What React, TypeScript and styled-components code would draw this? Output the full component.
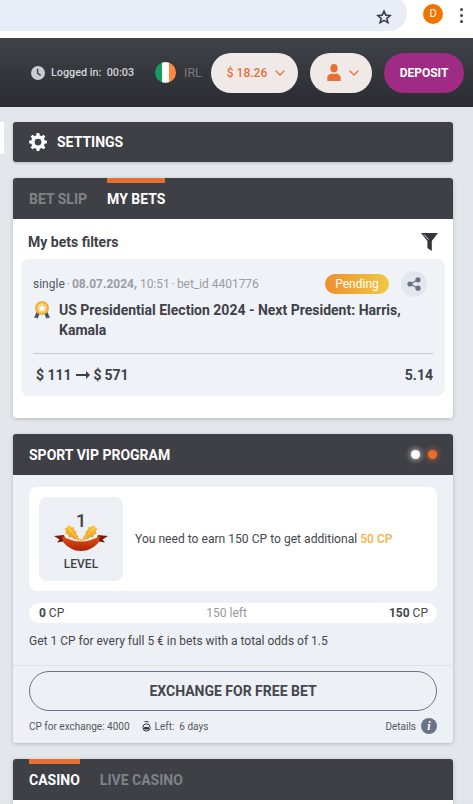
import styled, { createGlobalStyle } from "styled-components";
import { ChevronDown } from "lucide-react";

const GlobalStyle = createGlobalStyle`
  html, body {
    margin: 0;
    padding: 0;
    height: 100%;
    overflow: hidden;
    background: #e3e6ea;
    font-family: Roboto, "Liberation Sans", sans-serif;
  }
  * { box-sizing: border-box; }
`;

const BrowserBar = styled.div`
  height: 38px;
  background: #fff;
  display: flex;
  align-items: flex-start;
  overflow: hidden;
`;

const UrlField = styled.div`
  width: 407px;
  height: 36px;
  margin-top: -5px;
  background: #e9edf7;
  border-radius: 0 18px 18px 0;
  display: flex;
  align-items: center;
  justify-content: flex-end;
  padding: 7px 15px 0 0;
  flex: none;
`;

const Avatar = styled.div`
  width: 20px;
  height: 20px;
  margin: 4px 0 0 16px;
  border-radius: 50%;
  background: #f07400;
  color: #fff;
  font-size: 11px;
  line-height: 20px;
  text-align: center;
  flex: none;
`;

const MenuDots = styled.div`
  margin: 8px 0 0 17px;
  display: flex;
  flex-direction: column;
  gap: 3px;
  span {
    width: 3px;
    height: 3px;
    border-radius: 50%;
    background: #444;
  }
`;

const TopHeader = styled.header`
  height: 69px;
  background: linear-gradient(#3f4248, #2a2c31);
  display: flex;
  align-items: center;
  padding: 0 9px 0 31px;
`;

const LoginInfo = styled.div`
  display: flex;
  align-items: center;
  color: #d3d6da;
  font-size: 10.8px;
  font-weight: 500;
  width: 124px;
  span {
    margin-left: 6px;
    white-space: pre;
  }
`;

const Flag = styled.div`
  width: 21px;
  height: 21px;
  border-radius: 50%;
  overflow: hidden;
  display: flex;
  flex: none;
  i {
    flex: 1;
  }
`;

const Country = styled.span`
  color: #76797e;
  font-size: 12.5px;
  margin-left: 8px;
  width: 27px;
`;

const Pill = styled.button<{ $w: number }>`
  width: ${(p) => p.$w}px;
  height: 40px;
  margin-right: 12px;
  border: 0;
  border-radius: 20px;
  background: #efeae8;
  color: #ea6f35;
  font: 500 12px Roboto, sans-serif;
  display: flex;
  align-items: center;
  justify-content: center;
  gap: 5px;
  flex: none;
  padding: 0 0 0 6px;
`;

const DepositButton = styled.button`
  width: 80px;
  height: 40px;
  border: 0;
  border-radius: 20px;
  background: #9f2b84;
  color: #fff;
  font: 700 12px Roboto, sans-serif;
  padding: 0;
  flex: none;
`;

const Content = styled.main`
  padding-top: 15px;
  display: flex;
  flex-direction: column;
  gap: 16px;
`;

const SettingsRow = styled.div`
  display: flex;
  gap: 9px;
  align-items: flex-start;
`;

const SideTab = styled.div`
  width: 4px;
  height: 32px;
  background: #fff;
`;

const SettingsBar = styled.div`
  width: 440px;
  height: 40px;
  background: #3e4046;
  border-radius: 3px;
  box-shadow: 0 1px 3px rgba(0, 0, 0, 0.18);
  display: flex;
  align-items: center;
  padding-left: 16px;
  gap: 10px;
  color: #fff;
  font-size: 14px;
  font-weight: 700;
`;

const Card = styled.section<{ $bg?: string }>`
  width: 440px;
  margin-left: 13px;
  border-radius: 3px;
  overflow: hidden;
  background: ${(p) => p.$bg ?? "#fff"};
  box-shadow: 0 1px 4px rgba(0, 0, 0, 0.2);
`;

const CardHead = styled.div`
  height: 41px;
  background: #3e4046;
  display: flex;
  align-items: stretch;
  padding: 0 16px;
  gap: 20px;
`;

const Tab = styled.div<{ $active?: boolean }>`
  color: ${(p) => (p.$active ? "#fff" : "#808286")};
  border-top: 5px solid ${(p) => (p.$active ? "#e97033" : "transparent")};
  font-size: 14px;
  font-weight: 700;
  line-height: 32px;
  white-space: nowrap;
`;

const TitledHead = styled(CardHead)`
  align-items: center;
  justify-content: space-between;
  color: #fff;
  font-size: 14px;
  font-weight: 700;
`;

const Dots = styled.div`
  display: flex;
  gap: 8px;
`;

const Dot = styled.i<{ $c: string }>`
  width: 9px;
  height: 9px;
  border-radius: 50%;
  background: ${(p) => p.$c};
  box-shadow: 0 0 6px ${(p) => p.$c};
`;

const BetsBody = styled.div`
  height: 199px;
  padding: 0 8px;
`;

const FiltersRow = styled.div`
  height: 40px;
  display: flex;
  align-items: center;
  justify-content: space-between;
  padding: 6px 7px 0 7px;
  color: #3f4148;
  font-size: 14px;
  font-weight: 700;
`;

const BetCard = styled.div`
  height: 137px;
  background: #eff2f7;
  border-radius: 8px;
  padding: 12px 12px 0;
`;

const BetMeta = styled.div`
  height: 26px;
  display: flex;
  align-items: center;
  padding-right: 6px;
  font-size: 12px;
  color: #9a9da3;
  white-space: pre;
  b {
    font-weight: 700;
  }
`;

const BetType = styled.span`
  color: #55585f;
`;

const MetaDot = styled.span`
  margin: 0 2px;
`;

const BetId = styled.span`
  letter-spacing: -0.03px;
`;

const Pending = styled.span`
  margin-left: auto;
  width: 64px;
  height: 20px;
  border-radius: 10px;
  background: linear-gradient(90deg, #ef8f2c, #f0c945);
  color: #fff;
  font-size: 12px;
  line-height: 20px;
  text-align: center;
`;

const ShareButton = styled.span`
  width: 26px;
  height: 26px;
  margin-left: 12px;
  border-radius: 50%;
  background: #e3e6ec;
  display: flex;
  align-items: center;
  justify-content: center;
`;

const BetTitle = styled.div`
  display: flex;
  gap: 9px;
  margin-top: 3px;
  color: #3f4148;
  font-size: 14px;
  font-weight: 700;
  line-height: 20px;
  height: 53px;
  svg {
    flex: none;
    margin: 1px 0 0 1px;
  }
`;

const BetFoot = styled.div`
  border-top: 1px solid #c5c8ce;
  height: 42px;
  display: flex;
  align-items: center;
  justify-content: space-between;
  padding: 0 0 0 3px;
  color: #3f4148;
  font-size: 14px;
  font-weight: 700;
`;

const Stake = styled.span`
  display: flex;
  align-items: center;
  gap: 4px;
`;

const VipBody = styled.div`
  padding: 12px 16px 0;
  color: #45474e;
`;

const LevelPanel = styled.div`
  height: 104px;
  background: #fff;
  border-radius: 8px;
  display: flex;
  align-items: center;
  padding: 0 10px;
  font-size: 12.1px;
  gap: 12px;
  em {
    color: #f6b13e;
    font-style: normal;
    font-weight: 500;
  }
`;

const LevelBadge = styled.div`
  width: 84px;
  height: 84px;
  background: #eceff3;
  border-radius: 8px;
  display: flex;
  flex-direction: column;
  align-items: center;
  color: #3f4148;
  flex: none;
`;

const LevelNumber = styled.div`
  font-size: 18px;
  font-weight: 500;
  line-height: 22px;
  margin-top: 13px;
  height: 15px;
`;

const LevelLabel = styled.div`
  font-size: 12px;
  font-weight: 500;
  line-height: 14px;
  margin-top: 6px;
`;

const ProgressRow = styled.div`
  height: 20px;
  margin-top: 12px;
  border-radius: 10px;
  background: #fff;
  display: flex;
  align-items: center;
  justify-content: space-between;
  padding: 0 9px 0 10px;
  font-size: 12px;
  b {
    font-weight: 700;
  }
`;

const LeftAmount = styled.span`
  color: #98999e;
`;

const VipNote = styled.p`
  margin: 0;
  height: 42px;
  padding-top: 10px;
  font-size: 12px;
  line-height: 16px;
`;

const VipFoot = styled.div`
  border-top: 1px solid #dfe2e7;
  padding: 5px 16px 0;
  height: 78px;
`;

const ExchangeButton = styled.button`
  display: block;
  width: 408px;
  height: 40px;
  border: 1px solid #6d7488;
  border-radius: 20px;
  background: transparent;
  color: #45474e;
  font: 700 14px Roboto, sans-serif;
  padding: 0;
`;

const FootRow = styled.div`
  display: flex;
  align-items: center;
  margin-top: 7px;
  font-size: 10px;
  color: #55585f;
  white-space: pre;
`;

const Timer = styled.span`
  display: flex;
  align-items: center;
  gap: 4px;
  margin-left: 12px;
`;

const Details = styled.span`
  margin-left: auto;
  display: flex;
  align-items: center;
  gap: 5px;
`;

const InfoMark = styled.i`
  width: 16px;
  height: 16px;
  border-radius: 50%;
  background: #6b7388;
  color: #fff;
  font: italic 700 12px/16px "Liberation Serif", serif;
  text-align: center;
`;

const CasinoBody = styled.div`
  height: 20px;
`;

function StarIcon() {
  return (
    <svg width="16" height="16" viewBox="0 0 24 24" fill="none" stroke="#3c4043" strokeWidth="2.4">
      <path d="M12 3.2l2.7 6 6.5.6-4.9 4.3 1.5 6.4L12 17.1l-5.8 3.4 1.5-6.4-4.9-4.3 6.5-.6z" />
    </svg>
  );
}

function ClockIcon() {
  return (
    <svg width="14" height="14" viewBox="0 0 14 14">
      <circle cx="7" cy="7" r="7" fill="#c9ccd1" />
      <path d="M6.6 2.8v4.4l3 2.2" fill="none" stroke="#3a3c42" strokeWidth="1.4" />
    </svg>
  );
}

function UserIcon() {
  return (
    <svg width="14" height="17" viewBox="0 0 14 17" fill="#ea6f35">
      <ellipse cx="7" cy="4.2" rx="3.6" ry="4.2" />
      <path d="M0.3 17v-3.6c0-2.4 2.6-3.6 4.7-4 1.2.9 2.8.9 4 0 2.1.4 4.7 1.6 4.7 4V17z" />
    </svg>
  );
}

function GearIcon() {
  return (
    <svg width="18" height="18" viewBox="0 0 24 24" fill="#fff">
      <path
        fillRule="evenodd"
        d="M13.8 0h-3.6l-.6 3.3c-.8.2-1.5.5-2.2.9L4.7 2.3 2.2 4.8l1.9 2.7c-.4.7-.7 1.4-.9 2.2L0 10.2v3.6l3.2.6c.2.8.5 1.5.9 2.2l-1.9 2.7 2.5 2.5 2.7-1.9c.7.4 1.4.7 2.2.9l.6 3.2h3.6l.6-3.2c.8-.2 1.5-.5 2.2-.9l2.7 1.9 2.5-2.5-1.9-2.7c.4-.7.7-1.4.9-2.2l3.1-.6v-3.6l-3.1-.5c-.2-.8-.5-1.5-.9-2.2l1.9-2.7-2.5-2.5-2.7 1.9c-.7-.4-1.4-.7-2.2-.9zM12 7.5a4.5 4.5 0 110 9 4.5 4.5 0 010-9z"
      />
    </svg>
  );
}

function FilterIcon() {
  return (
    <svg width="17" height="18" viewBox="0 0 17 18">
      <path d="M0 0h17L10.8 8v10L6.4 15V8z" fill="#33353b" />
      <path d="M3 1.6l4.6 5" fill="none" stroke="#fff" strokeWidth="0.8" />
    </svg>
  );
}

function ShareIcon() {
  return (
    <svg width="14" height="14" viewBox="0 0 14 14" fill="#6a7386">
      <circle cx="11" cy="2.8" r="2.6" />
      <circle cx="11" cy="11.2" r="2.6" />
      <circle cx="3" cy="7" r="2.6" />
      <path d="M3 7l8-4.2M3 7l8 4.2" stroke="#6a7386" strokeWidth="1.2" />
    </svg>
  );
}

function MedalIcon() {
  return (
    <svg width="16" height="19" viewBox="0 0 16 19">
      <path d="M3 10l-3 7 2.4-.6L3.4 18 6 12zM13 10l3 7-2.4-.6-1 1.6L10 12z" fill="#445066" />
      <circle cx="8" cy="7" r="7" fill="#f0b03c" />
      <circle cx="8" cy="7" r="4.8" fill="#f7d27a" />
      <path d="M8 3.4l1.1 2.3 2.5.3-1.8 1.7.5 2.5L8 9.1l-2.3 1.1.5-2.5L4.400 6l2.500-.3z" fill="#fff" />
    </svg>
  );
}

function ArrowIcon() {
  return (
    <svg width="14" height="8" viewBox="0 0 14 8" fill="#3f4148">
      <path d="M0 3.1h10V0l4 4-4 4V4.900H0z" />
    </svg>
  );
}

function WreathIcon() {
  return (
    <svg width="54" height="26" viewBox="0 0 54 26">
      <defs>
        <linearGradient id="ribbon" x1="0" x2="0" y1="0" y2="1">
          <stop offset="0" stopColor="#e8500f" />
          <stop offset="1" stopColor="#a92408" />
        </linearGradient>
        <linearGradient id="leaf" x1="0" x2="0" y1="0" y2="1">
          <stop offset="0" stopColor="#f7c63f" />
          <stop offset="1" stopColor="#ec9a17" />
        </linearGradient>
      </defs>
      <path d="M0 11l10-1 2 6-9 1.500 2.500-3z" fill="#7a1c0c" />
      <path d="M54 11l-10-1-2 6 9 1.500-2.500-3z" fill="#7a1c0c" />
      <path d="M25 15l-5-1-2-2-3 .5-1-3-2.500-.5.5-3-1.500-2.500L13 2.500 14 0l3 2 2.500 0 1 3 2 1.500-.5 2.500 2 2z" fill="url(#leaf)" />
      <path d="M29 15l5-1 2-2 3 .5 1-3 2.500-.5-.5-3 1.500-2.500L41 2.500 40 0l-3 2-2.500 0-1 3-2 1.500.5 2.500-2 2z" fill="url(#leaf)" />
      <path d="M24 14.500L14 2.500M30 14.500L40 2.500" stroke="#fbe08a" strokeWidth="0.8" fill="none" />
      <circle cx="25.500" cy="15" r="1.300" fill="none" stroke="#e7a42a" strokeWidth="0.7" />
      <circle cx="28.500" cy="15" r="1.300" fill="none" stroke="#e7a42a" strokeWidth="0.7" />
      <path d="M8 11c6 3.500 12 5.500 19 5.500S40 14.500 46 11l-1.500 6.500C39.500 23 34 26 27 26S14.500 23 9.500 17.500z" fill="url(#ribbon)" />
    </svg>
  );
}

function TimerIcon() {
  return (
    <svg width="9" height="11" viewBox="0 0 9 11" fill="none" stroke="#33353b">
      <path d="M2.500.7h4" />
      <circle cx="4.500" cy="6.500" r="3.600" />
      <path d="M2.500 6.500h4v1.500h-4z" fill="#33353b" />
    </svg>
  );
}

export default function App() {
  return (
    <>
      <GlobalStyle />
      <BrowserBar>
        <UrlField>
          <StarIcon />
        </UrlField>
        <Avatar>D</Avatar>
        <MenuDots>
          <span />
          <span />
          <span />
        </MenuDots>
      </BrowserBar>
      <TopHeader>
        <LoginInfo>
          <ClockIcon />
          <span>Logged in:  00:03</span>
        </LoginInfo>
        <Flag>
          <i style={{ background: "#169b62" }} />
          <i style={{ background: "#fff" }} />
          <i style={{ background: "#ff883e" }} />
        </Flag>
        <Country>IRL</Country>
        <Pill $w={87}>
          $ 18.26
          <ChevronDown size={16} strokeWidth={1.8} />
        </Pill>
        <Pill $w={62}>
          <UserIcon />
          <ChevronDown size={16} strokeWidth={1.8} />
        </Pill>
        <DepositButton>DEPOSIT</DepositButton>
      </TopHeader>
      <Content>
        <SettingsRow>
          <SideTab />
          <SettingsBar>
            <GearIcon />
            SETTINGS
          </SettingsBar>
        </SettingsRow>
        <Card>
          <CardHead>
            <Tab>BET SLIP</Tab>
            <Tab $active>MY BETS</Tab>
          </CardHead>
          <BetsBody>
            <FiltersRow>
              My bets filters
              <FilterIcon />
            </FiltersRow>
            <BetCard>
              <BetMeta>
                <BetType>single</BetType>
                <MetaDot>·</MetaDot>
                <b>08.07.2024,</b> 10:51<MetaDot>·</MetaDot>
                <BetId>bet_id 4401776</BetId>
                <Pending>Pending</Pending>
                <ShareButton>
                  <ShareIcon />
                </ShareButton>
              </BetMeta>
              <BetTitle>
                <MedalIcon />
                <span>US Presidential Election 2024 - Next President: Harris, Kamala</span>
              </BetTitle>
              <BetFoot>
                <Stake>
                  $ 111 <ArrowIcon /> $&#8201;571
                </Stake>
                5.14
              </BetFoot>
            </BetCard>
          </BetsBody>
        </Card>
        <Card $bg="#edf0f4">
          <TitledHead>
            SPORT VIP PROGRAM
            <Dots>
              <Dot $c="#ffffff" />
              <Dot $c="#e96c2c" />
            </Dots>
          </TitledHead>
          <VipBody>
            <LevelPanel>
              <LevelBadge>
                <LevelNumber>1</LevelNumber>
                <WreathIcon />
                <LevelLabel>LEVEL</LevelLabel>
              </LevelBadge>
              <span>
                You need to earn 150 CP to get additional <em>50 CP</em>
              </span>
            </LevelPanel>
            <ProgressRow>
              <span>
                <b>0</b> CP
              </span>
              <LeftAmount>150 left</LeftAmount>
              <span>
                <b>150</b> CP
              </span>
            </ProgressRow>
            <VipNote>Get 1 CP for every full 5 € in bets with a total odds of 1.5</VipNote>
          </VipBody>
          <VipFoot>
            <ExchangeButton>EXCHANGE FOR FREE BET</ExchangeButton>
            <FootRow>
              CP for exchange: 4000
              <Timer>
                <TimerIcon />
                Left:  6 days
              </Timer>
              <Details>
                Details
                <InfoMark>i</InfoMark>
              </Details>
            </FootRow>
          </VipFoot>
        </Card>
        <Card>
          <CardHead>
            <Tab $active>CASINO</Tab>
            <Tab>LIVE CASINO</Tab>
          </CardHead>
          <CasinoBody />
        </Card>
      </Content>
    </>
  );
}
